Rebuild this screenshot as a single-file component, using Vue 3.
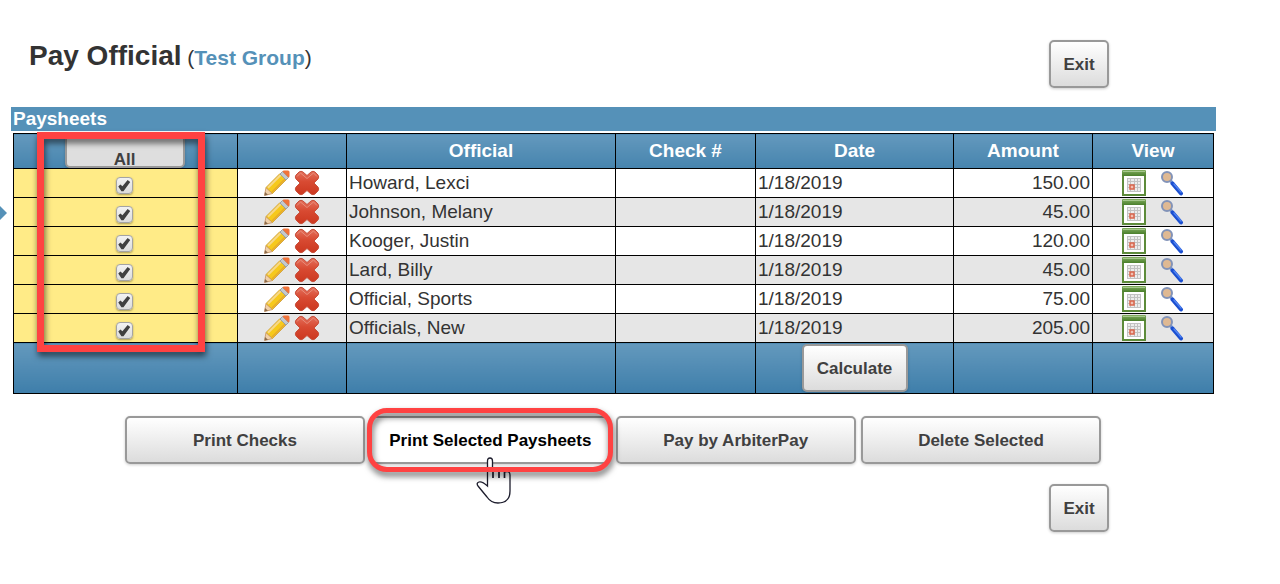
<script setup>
import { ref } from 'vue'

const rows = ref([
  { name: 'Howard, Lexci', date: '1/18/2019', amount: '150.00', checked: true },
  { name: 'Johnson, Melany', date: '1/18/2019', amount: '45.00', checked: true },
  { name: 'Kooger, Justin', date: '1/18/2019', amount: '120.00', checked: true },
  { name: 'Lard, Billy', date: '1/18/2019', amount: '45.00', checked: true },
  { name: 'Official, Sports', date: '1/18/2019', amount: '75.00', checked: true },
  { name: 'Officials, New', date: '1/18/2019', amount: '205.00', checked: true },
])

function selectAll() {
  const next = !rows.value.every((r) => r.checked)
  rows.value.forEach((r) => (r.checked = next))
}
</script>

<template>
  <svg width="0" height="0" class="defs" aria-hidden="true">
    <defs>
      <linearGradient id="cross-fill" x1="0" y1="0" x2="0" y2="1">
        <stop offset="0" stop-color="#e4705c" />
        <stop offset="0.45" stop-color="#d84a32" />
        <stop offset="1" stop-color="#cc3820" />
      </linearGradient>
      <linearGradient id="cal-fill" x1="0" y1="0" x2="0" y2="1">
        <stop offset="0" stop-color="#82ad60" />
        <stop offset="1" stop-color="#4b7f2c" />
      </linearGradient>
    </defs>
  </svg>
  <main class="page">
    <span class="drawer-arrow"></span>
    <header class="head">
      <h1 class="title">Pay Official <span class="group">(<a href="#">Test Group</a>)</span></h1>
      <button type="button" class="btn exit">Exit</button>
    </header>

    <h2 class="bar">Paysheets</h2>
    <div class="sheet">
      <table>
        <colgroup>
          <col class="c-select" />
          <col class="c-tools" />
          <col class="c-official" />
          <col class="c-check" />
          <col class="c-date" />
          <col class="c-amount" />
          <col class="c-view" />
        </colgroup>
        <thead>
          <tr>
            <th class="all-cell"><button type="button" class="btn all" @click="selectAll">All</button></th>
            <th></th>
            <th>Official</th>
            <th>Check #</th>
            <th>Date</th>
            <th>Amount</th>
            <th>View</th>
          </tr>
        </thead>
        <tbody>
          <tr v-for="row in rows" :key="row.name">
            <td class="pick"><input v-model="row.checked" type="checkbox" :aria-label="'Select ' + row.name" /></td>
            <td>
              <div class="icons tools">
                <button type="button" class="icon" :aria-label="'Edit ' + row.name">
                  <svg width="26" height="26" viewBox="0 0 26 26">
                    <path d="M0.500 25.500 L2 17.500 L8.500 23.500 Z" fill="#f0d0aa" stroke="#cda074" stroke-width="1" />
                    <path d="M0.500 25.500 L1 22 L4 24.800 Z" fill="#8a6a4c" />
                    <path d="M2 17.500 L16 3.500 L22.500 9.500 L8.500 23.500 Z" fill="#f6c91c" stroke="#d3a54a" stroke-width="1" />
                    <path d="M4 17.800 L17 4.800" stroke="#f6d888" stroke-width="2" />
                    <path d="M8 22 L21 9" stroke="#e5a92c" stroke-width="1.500" />
                    <path d="M16 4 L18.500 1.500 L24.500 7.500 L22 10 Z" fill="#c3c9cd" stroke="#98a1a8" stroke-width="1" />
                    <path d="M18.500 1.500 Q19 0.500 20 0.500 L24 0.500 Q25.500 0.500 25.500 2 L25.500 6 Q25.500 7 24.500 7.500 Z" fill="#f0733a" />
                  </svg>
                </button>
                <button type="button" class="icon" :aria-label="'Delete ' + row.name">
                  <svg width="26" height="26" viewBox="0 0 26 26">
                    <path
                      d="M5 2 Q7 0.500 9 2 L13 5.500 L17 2 Q19 0.500 21 2 L24 5 Q25.500 7 24 9 L20 13 L24 17 Q25.500 19 24 21 L21 24 Q19 25.500 17 24 L13 20.500 L9 24 Q7 25.500 5 24 L2 21 Q0.500 19 2 17 L6 13 L2 9 Q0.500 7 2 5 Z"
                      fill="url(#cross-fill)" stroke="#c8503c" stroke-width="1" stroke-linejoin="round"
                    />
                    <path d="M3 6.500 L6.500 3 L13 8.500 L19.500 3 L23 6.500" fill="none" stroke="#e88d7a" stroke-width="1" />
                  </svg>
                </button>
              </div>
            </td>
            <td>{{ row.name }}</td>
            <td></td>
            <td>{{ row.date }}</td>
            <td class="num">{{ row.amount }}</td>
            <td>
              <div class="icons views">
                <button type="button" class="icon" :aria-label="'View schedule for ' + row.name">
                  <svg width="26" height="26" viewBox="0 0 26 26">
                    <rect x="2" y="4" width="22" height="21" fill="#fff" stroke="#5d8b3a" stroke-width="2" />
                    <rect x="1" y="0" width="24" height="6" rx="1" fill="url(#cal-fill)" />
                    <path d="M2 1.500 H24" stroke="#a6c68c" stroke-width="1" />
                    <rect x="6" y="8" width="14" height="14" fill="#ececec" />
                    <path d="M6 8.500 H20 M6 11.500 H20 M6 14.500 H20 M6 17.500 H20 M6 21.500 H20 M6.500 8 V22 M9.500 8 V22 M13.500 8 V22 M16.500 8 V22 M19.500 8 V22" stroke="#c2c2c2" stroke-width="1" />
                    <rect x="9" y="15" width="4" height="4" fill="#f0c0b4" stroke="#d9644b" stroke-width="1.500" />
                  </svg>
                </button>
                <button type="button" class="icon" :aria-label="'View details for ' + row.name">
                  <svg width="26" height="26" viewBox="0 0 26 26">
                    <path d="M10 10 L14 15" stroke="#6f90d4" stroke-width="3" />
                    <path d="M12.500 13.500 L21 23.500" stroke="#1b4fd0" stroke-width="4" stroke-linecap="round" />
                    <path d="M14 14 L21 22" stroke="#4f83f2" stroke-width="1.500" stroke-linecap="round" />
                    <circle cx="7" cy="7" r="5" fill="#dfb993" stroke="#8293b8" stroke-width="2" />
                  </svg>
                </button>
              </div>
            </td>
          </tr>
        </tbody>
        <tfoot>
          <tr>
            <td></td>
            <td></td>
            <td></td>
            <td></td>
            <td class="calc-cell"><button type="button" class="btn calc">Calculate</button></td>
            <td></td>
            <td></td>
          </tr>
        </tfoot>
      </table>
      <span class="mark mark-column"></span>
    </div>

    <div class="actions">
      <button type="button" class="btn wide">Print Checks</button>
      <div class="focus">
        <button type="button" class="btn wide active">Print Selected Paysheets</button>
        <svg class="hand" width="36" height="48" viewBox="0 0 36 48">
          <path
            d="M11.500 29 V4 Q11.500 1 14 1 Q16.500 1 16.500 4 V13 Q19 11 22 12 L23 13 Q26 11.500 28 13.500 L29 15 Q34 13.500 34 18 V34 Q34 46 22 46 Q15 46 11 40 L2 29 Q0 26 3 25 Q6 24 11.500 29 Z"
            fill="#fff" stroke="#1c1c2c" stroke-width="1.300"
          />
          <path d="M17 14 V21 M23 14 V21 M28.500 15 V21" stroke="#1c1c2c" stroke-width="1.700" />
        </svg>
        <span class="mark mark-button"></span>
      </div>
      <button type="button" class="btn wide">Pay by ArbiterPay</button>
      <button type="button" class="btn wide">Delete Selected</button>
    </div>

    <footer class="foot">
      <button type="button" class="btn exit">Exit</button>
    </footer>
  </main>
</template>

<style>
body {
  background: #fff;
}
</style>

<style scoped>
.defs {
  position: absolute;
}
.page {
  position: relative;
  padding: 40px 64px 40px 11px;
  font-family: "Liberation Sans", Arial, sans-serif;
  font-size: 19px;
  color: #333;
}
.drawer-arrow {
  position: absolute;
  left: 0;
  top: 206px;
  border: solid transparent;
  border-width: 7px 0 7px 7px;
  border-left-color: #5591b8;
}
.head,
.foot {
  display: flex;
  justify-content: space-between;
  align-items: flex-start;
  padding: 0 107px 0 18px;
}
.head {
  margin-bottom: 19px;
}
.foot {
  justify-content: flex-end;
  margin-top: 20px;
}
.title {
  margin: 0;
  font-size: 28px;
  line-height: 32px;
}
.group {
  margin-left: -2px;
  font-size: 21px;
  font-weight: normal;
}
.group a {
  color: #5591b8;
  font-weight: bold;
  text-decoration: none;
}
.bar {
  margin: 0 0 2px;
  padding: 0 2px;
  font-size: 19px;
  line-height: 24px;
  color: #fff;
  background: #5591b8;
}
.sheet {
  position: relative;
  margin: 0 2px;
}
table {
  width: 100%;
  table-layout: fixed;
  border-collapse: collapse;
}
.c-select { width: 224px; }
.c-tools { width: 109px; }
.c-official { width: 269px; }
.c-check { width: 140px; }
.c-date { width: 198px; }
.c-amount { width: 139px; }
.c-view { width: 121px; }
th,
td {
  box-sizing: border-box;
  padding: 0 2px;
  border: 1px solid #000;
  text-align: left;
}
th {
  height: 35px;
  color: #fff;
  text-align: center;
  background: linear-gradient(#6499bd, #4684ae);
}
tbody td {
  height: 29px;
  line-height: 24px;
}
tbody td:has(.icons) {
  padding: 0;
}
tbody tr:nth-child(even) {
  background: #e6e6e6;
}
tfoot td {
  height: 51px;
  padding: 0;
  background: linear-gradient(#6499bd, #3e7eaa);
}
tbody .pick {
  padding: 5px 3px 0 0;
  text-align: center;
  line-height: 0;
  background: #ffeb87;
}
td.num {
  text-align: right;
}
.all-cell {
  padding: 0 2px 0 0;
}
.calc-cell {
  text-align: center;
}
input[type='checkbox'] {
  appearance: none;
  width: 17px;
  height: 17px;
  margin: 0;
  padding: 1px;
  border: 1px solid #a4a4a4;
  border-radius: 4px;
  background: linear-gradient(#f2f2f2, #dcdcdc);
  box-shadow: 0 1px 2px rgba(0, 0, 0, 0.35);
}
input[type='checkbox']:checked::before {
  content: '';
  display: block;
  height: 13px;
  background: #404040;
  clip-path: polygon(6% 58%, 22% 42%, 38% 56%, 78% 8%, 98% 24%, 46% 94%, 30% 94%);
}
.icons {
  display: flex;
  justify-content: center;
  height: 28px;
  align-items: center;
}
.tools {
  gap: 4px;
}
.views {
  gap: 13px;
}
.icon {
  display: block;
  padding: 0;
  border: 0;
  background: none;
  line-height: 0;
}
.btn {
  box-sizing: border-box;
  height: 48px;
  padding: 2px 12px 0;
  border: 2px solid #999;
  border-radius: 5px;
  background: linear-gradient(#fff, #dcdcdc);
  box-shadow: 0 1px 3px rgba(0, 0, 0, 0.2);
  font: bold 17px "Liberation Sans", Arial, sans-serif;
  line-height: 20px;
  color: #404040;
}
.exit {
  width: 60px;
}
.all {
  display: block;
  width: 120px;
  height: 34px;
  margin: 0 auto;
  padding: 14px 0 0;
  background: #dedede;
}
.calc {
  display: block;
  width: 106px;
  margin: 0 auto;
}
.actions {
  display: flex;
  justify-content: space-between;
  max-width: 976px;
  margin: 22px auto 0;
  padding-right: 1px;
}
.wide {
  width: 240px;
}
.focus {
  position: relative;
}
.active {
  color: #000;
  background: #fff;
}
.mark {
  position: absolute;
  box-sizing: border-box;
  border: 7px solid #ff4242;
  filter: drop-shadow(1px 4px 3px rgba(0, 0, 0, 0.6));
  pointer-events: none;
}
.mark-column {
  left: 24px;
  top: -1px;
  width: 168px;
  height: 220px;
}
.mark-button {
  inset: -8px -3px;
  border-width: 5px;
  border-radius: 20px;
}
.hand {
  position: absolute;
  left: 106px;
  top: 41px;
}
</style>
